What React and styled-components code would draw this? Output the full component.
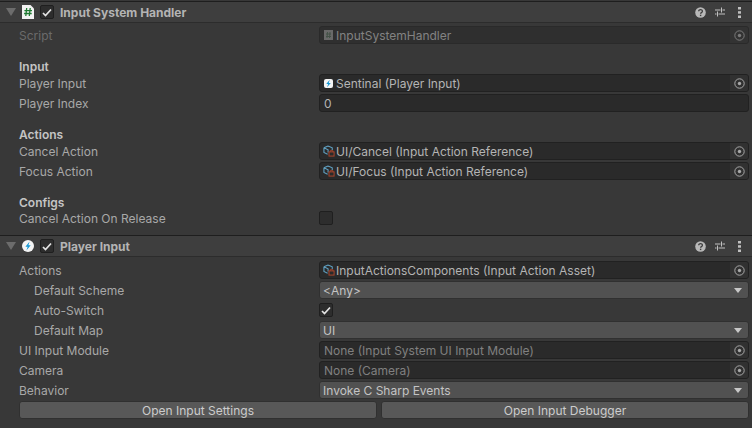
import React from "react";
import styled, { createGlobalStyle } from "styled-components";

const GlobalStyle = createGlobalStyle`
  html, body {
    margin: 0;
    padding: 0;
    background: #383838;
    overflow: hidden;
  }
  body {
    font-family: Inter, "Liberation Sans", sans-serif;
    font-size: 12px;
    color: #bcbcbc;
  }
`;

const ScriptIcon = () => (
  <svg width="12" height="14" viewBox="0 0 12 14">
    <path d="M0 0h8.500L12 3.500V14H0z" fill="#f2f2f2" />
    <path d="M4.700 3 3.800 11M8.200 3 7.300 11M2.400 5.700h7.600M2.100 8.500h7.600" stroke="#1f7a32" strokeWidth="1.300" fill="none" />
  </svg>
);

const BoltIcon = () => (
  <svg width="12" height="12" viewBox="0 0 12 12">
    <circle cx="6" cy="6" r="6" fill="#f4f4f4" />
    <path d="M7.600 1.500 3.400 6.700h2.300L4.400 10.600 8.700 5.300H6.400z" fill="#1497d4" />
  </svg>
);

const BoltSquare = () => (
  <svg width="9" height="9" viewBox="0 0 9 9">
    <rect width="9" height="9" rx="2" fill="#f4f4f4" />
    <path d="M5.800.800 2.200 5h2L3 8.300 6.800 4H4.700z" fill="#1497d4" />
  </svg>
);

const SmallScript = () => (
  <svg width="9" height="10" viewBox="0 0 9 10">
    <rect width="9" height="10" fill="#8a8a8a" />
    <path d="M3.500 2 3 8M6 2 5.500 8M2 4h5M2 6.500h5" stroke="#4a6350" strokeWidth="1" fill="none" />
  </svg>
);

const ActionSvg = styled.svg`
  margin-left: -1px;
  flex: none;
`;

const ActionIcon = () => (
  <ActionSvg width="12" height="12" viewBox="0 0 13 13">
    <path d="M5.500 1 10 3v2.500M1 3l4.500-2M1 3v5l4 2M1 3l4.500 2.200V8" stroke="#5f9fc0" strokeWidth="1.200" fill="none" />
    <rect x="6.500" y="7.500" width="5.500" height="4.500" fill="none" stroke="#a8452c" strokeWidth="1.100" />
    <path d="M7.800 7.500V6.200h3v1.300" stroke="#a8452c" strokeWidth="1" fill="none" />
  </ActionSvg>
);

const TargetIcon = () => (
  <svg width="11" height="11" viewBox="0 0 11 11">
    <circle cx="5.500" cy="5.500" r="4.700" fill="none" stroke="#a8a8a8" strokeWidth="1" />
    <circle cx="5.500" cy="5.500" r="1.700" fill="#a8a8a8" />
  </svg>
);

const HelpIcon = () => (
  <svg width="11" height="11" viewBox="0 0 11 11">
    <circle cx="5.500" cy="5.500" r="5.300" fill="#b8b8b8" />
    <path d="M3.700 4.300c0-2.300 3.700-2.300 3.700 0 0 1.400-1.800 1.300-1.800 2.500" stroke="#3e3e3e" strokeWidth="1.300" fill="none" />
    <rect x="4.900" y="7.700" width="1.400" height="1.400" fill="#3e3e3e" />
  </svg>
);

const SlidersIcon = () => (
  <svg width="10" height="10" viewBox="0 0 10 10">
    <path d="M0 3h5.500M7.500 3H10M6.500 0.500v5M0 7h1.500M3.500 7H10M2.500 4.500v5" stroke="#c0c0c0" strokeWidth="1" fill="none" />
  </svg>
);

const DotsSvg = styled.svg`
  margin-left: 4px;
`;

const DotsIcon = () => (
  <DotsSvg width="3" height="11" viewBox="0 0 3 11">
    <rect width="3" height="2.500" y="0" fill="#c0c0c0" />
    <rect width="3" height="2.500" y="4.200" fill="#c0c0c0" />
    <rect width="3" height="2.500" y="8.500" fill="#c0c0c0" />
  </DotsSvg>
);

const CheckMark = () => (
  <svg width="10" height="9" viewBox="0 0 10 9">
    <path d="M1 5l2.500 2.500L9 1.500" stroke="#e4e4e4" strokeWidth="1.700" fill="none" />
  </svg>
);

const Panel = styled.div`
  width: 752px;
  height: 428px;
  overflow: hidden;
  background: #383838;
  display: flex;
  flex-direction: column;
`;

const Header = styled.div`
  height: 20px;
  flex: none;
  margin-top: ${(p) => p.$top}px;
  background: #3e3e3e;
  border-top: 1px solid #1e1e1e;
  border-bottom: 1px solid #2c2c2c;
  display: flex;
  align-items: center;
  padding: 0 11px 0 6px;
  gap: 6px;
`;

const Foldout = styled.div`
  width: 0;
  height: 0;
  border-left: 5px solid transparent;
  border-right: 5px solid transparent;
  border-top: 8px solid #6c6c6c;
`;

const HeaderTitle = styled.div`
  flex: 1;
  font-weight: 700;
  font-size: 12px;
  color: #b4b4b4;
`;

const HeaderTools = styled.div`
  display: flex;
  align-items: center;
  gap: 9px;
`;

const Body = styled.div`
  display: flex;
  flex-direction: column;
  padding: ${(p) => p.$pad}px 3px 0 19px;
`;

const Row = styled.div`
  height: ${(p) => p.$height || 20}px;
  flex: none;
  display: grid;
  grid-template-columns: 300px 1fr;
  align-items: center;
`;

const Heading = styled.div`
  height: 15px;
  box-sizing: border-box;
  padding-top: 1px;
  margin-top: 13px;
  display: flex;
  align-items: center;
  font-weight: 600;
  color: #c4c4c4;
`;

const Label = styled.div`
  padding-left: ${(p) => (p.$nested ? 15 : 0)}px;
  color: ${(p) => (p.$muted ? "#6b6b6b" : "#a8a8a8")};
`;

const Field = styled.div`
  height: 18px;
  box-sizing: border-box;
  background: #2a2a2a;
  border: 1px solid #212121;
  border-radius: 3px;
  display: flex;
  align-items: center;
  padding-left: 4px;
  gap: 1px;
  opacity: ${(p) => (p.$disabled ? 0.6 : 1)};
  color: ${(p) => (p.$none ? "#808080" : "#b4b4b4")};
`;

const FieldText = styled.span`
  flex: 1;
  margin-left: ${(p) => p.$indent || 0}px;
  white-space: nowrap;
`;

const Picker = styled.div`
  width: 18px;
  height: 16px;
  flex: none;
  background: #313131;
  border-radius: 0 2px 2px 0;
  display: flex;
  align-items: center;
  justify-content: center;
`;

const Dropdown = styled.div`
  height: 18px;
  box-sizing: border-box;
  background: #515151;
  border: 1px solid #303030;
  border-radius: 3px;
  display: flex;
  align-items: center;
  justify-content: space-between;
  padding: 0 6px 0 3px;
  color: #c4c4c4;
`;

const Caret = styled.div`
  width: 0;
  height: 0;
  border-left: 4px solid transparent;
  border-right: 4px solid transparent;
  border-top: 5px solid #c8c8c8;
`;

const CheckBox = styled.div`
  width: 14px;
  height: 14px;
  flex: none;
  box-sizing: border-box;
  background: #2d2d2d;
  border: 1px solid #1f1f1f;
  border-radius: 2px;
  display: flex;
  align-items: center;
  justify-content: center;
`;

const ButtonRow = styled.div`
  display: grid;
  grid-template-columns: 358px 1fr;
  gap: 4px;
  padding-top: 1px;
`;

const Button = styled.div`
  height: 18px;
  box-sizing: border-box;
  background: #585858;
  border: 1px solid #303030;
  border-radius: 3px;
  display: flex;
  align-items: center;
  justify-content: center;
  color: #cccccc;
`;

const ObjectRow = ({ label, icon, text, indent, disabled, none }) => (
  <Row>
    <Label $muted={disabled}>{label}</Label>
    <Field $disabled={disabled} $none={none}>
      {icon}
      <FieldText $indent={indent}>{text}</FieldText>
      <Picker>
        <TargetIcon />
      </Picker>
    </Field>
  </Row>
);

const DropdownRow = ({ label, nested, value }) => (
  <Row>
    <Label $nested={nested}>{label}</Label>
    <Dropdown>
      {value}
      <Caret />
    </Dropdown>
  </Row>
);

const CheckRow = ({ label, nested, checked, height }) => (
  <Row $height={height}>
    <Label $nested={nested}>{label}</Label>
    <CheckBox>{checked && <CheckMark />}</CheckBox>
  </Row>
);

const ComponentHeader = ({ icon, title, top }) => (
  <Header $top={top}>
    <Foldout />
    {icon}
    <CheckBox>
      <CheckMark />
    </CheckBox>
    <HeaderTitle>{title}</HeaderTitle>
    <HeaderTools>
      <HelpIcon />
      <SlidersIcon />
      <DotsIcon />
    </HeaderTools>
  </Header>
);

export default function App() {
  return (
    <Panel>
      <GlobalStyle />
      <ComponentHeader top={1} icon={<ScriptIcon />} title="Input System Handler" />
      <Body $pad={2}>
        <ObjectRow label="Script" icon={<SmallScript />} indent={2} text="InputSystemHandler" disabled />
        <Heading>Input</Heading>
        <ObjectRow label="Player Input" icon={<BoltSquare />} indent={2} text="Sentinal (Player Input)" />
        <Row>
          <Label>Player Index</Label>
          <Field>0</Field>
        </Row>
        <Heading>Actions</Heading>
        <ObjectRow label="Cancel Action" icon={<ActionIcon />} text="UI/Cancel (Input Action Reference)" />
        <ObjectRow label="Focus Action" icon={<ActionIcon />} text="UI/Focus (Input Action Reference)" />
        <Heading>Configs</Heading>
        <CheckRow label="Cancel Action On Release" height={18} />
      </Body>
      <ComponentHeader top={8} icon={<BoltIcon />} title="Player Input" />
      <Body $pad={3}>
        <ObjectRow label="Actions" icon={<ActionIcon />} text="InputActionsComponents (Input Action Asset)" />
        <DropdownRow label="Default Scheme" nested value="<Any>" />
        <CheckRow label="Auto-Switch" nested checked />
        <DropdownRow label="Default Map" nested value="UI" />
        <ObjectRow label="UI Input Module" text="None (Input System UI Input Module)" none />
        <ObjectRow label="Camera" text="None (Camera)" none />
        <DropdownRow label="Behavior" value="Invoke C Sharp Events" />
        <ButtonRow>
          <Button>Open Input Settings</Button>
          <Button>Open Input Debugger</Button>
        </ButtonRow>
      </Body>
    </Panel>
  );
}
